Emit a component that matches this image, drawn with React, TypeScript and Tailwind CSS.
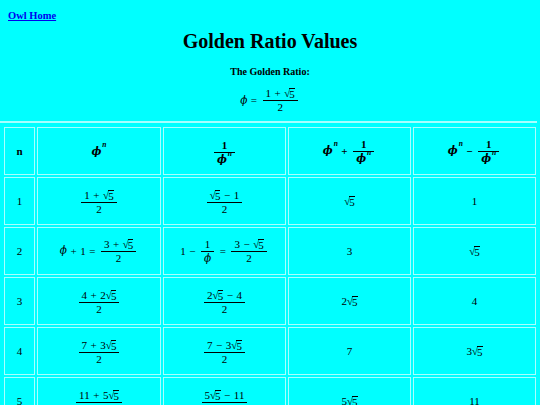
import React from "react";

const Sqrt = ({ children }: { children: React.ReactNode }) => (
  <span className="inline-flex items-start">
    <span className="leading-[12px] mr-[-1px]">√</span>
    <span className="border-t border-black leading-[11px] mt-[1px]">{children}</span>
  </span>
);

const Frac = ({ num, den }: { num: React.ReactNode; den: React.ReactNode }) => (
  <span className="inline-flex flex-col items-center align-middle mx-[2px]">
    <span className="px-[3px] leading-[13px] whitespace-nowrap">{num}</span>
    <span className="w-full border-t border-black" />
    <span className="px-[3px] leading-[13px] whitespace-nowrap">{den}</span>
  </span>
);

const Op = ({ c }: { c: string }) => <span className="mx-[3.5px]">{c}</span>;

const Phi = () => <span className="italic font-['DejaVu_Serif',serif] text-[10.5px]">ϕ</span>;
const PhiN = () => (
  <span className="inline-flex items-start whitespace-nowrap">
    <Phi />
    <span className="italic text-[7.5px] leading-[8px] ml-[1px] relative top-[-3px]">n</span>
  </span>
);

const Cell = ({ children }: { children: React.ReactNode }) => (
  <td className="border border-[#a8ffff] h-[48px] text-center align-middle p-0">
    <span className="inline-flex items-center justify-center whitespace-nowrap">{children}</span>
  </td>
);
const Head = ({ children, w }: { children: React.ReactNode; w?: string }) => (
  <th className={`border border-[#a8ffff] h-[48px] text-center align-middle p-0 font-bold ${w ?? ""}`}>
    <span className="inline-flex items-center justify-center whitespace-nowrap">{children}</span>
  </th>
);

export default function App() {
  const rows: React.ReactNode[][] = [
    [
      "1",
      <Frac num={<>1<Op c="+" /><Sqrt>5</Sqrt></>} den="2" />,
      <Frac num={<><Sqrt>5</Sqrt><Op c="−" />1</>} den="2" />,
      <Sqrt>5</Sqrt>,
      "1",
    ],
    [
      "2",
      <><Phi /><Op c="+" />1<Op c="=" /><Frac num={<>3<Op c="+" /><Sqrt>5</Sqrt></>} den="2" /></>,
      <>1<Op c="−" /><Frac num="1" den={<Phi />} /><Op c="=" /><Frac num={<>3<Op c="−" /><Sqrt>5</Sqrt></>} den="2" /></>,
      "3",
      <Sqrt>5</Sqrt>,
    ],
    [
      "3",
      <Frac num={<>4<Op c="+" />2<Sqrt>5</Sqrt></>} den="2" />,
      <Frac num={<>2<Sqrt>5</Sqrt><Op c="−" />4</>} den="2" />,
      <>2<Sqrt>5</Sqrt></>,
      "4",
    ],
    [
      "4",
      <Frac num={<>7<Op c="+" />3<Sqrt>5</Sqrt></>} den="2" />,
      <Frac num={<>7<Op c="−" />3<Sqrt>5</Sqrt></>} den="2" />,
      "7",
      <>3<Sqrt>5</Sqrt></>,
    ],
    [
      "5",
      <Frac num={<>11<Op c="+" />5<Sqrt>5</Sqrt></>} den="2" />,
      <Frac num={<>5<Sqrt>5</Sqrt><Op c="−" />11</>} den="2" />,
      <>5<Sqrt>5</Sqrt></>,
      "11",
    ],
  ];

  return (
    <div className="h-[405px] overflow-hidden bg-[#00ffff] font-['Liberation_Serif',serif] text-black">
      <div className="pt-[8px] pl-[8px] leading-[12px]">
        <a href="#" className="text-[10.5px] font-bold text-[#0000ee] underline">
          Owl Home
        </a>
      </div>
      <h1 className="mt-[7px] text-center text-[20px] leading-[24px] font-bold">Golden Ratio Values</h1>
      <div className="mt-[13px] text-center text-[10px] leading-[12px] font-bold">The Golden Ratio:</div>
      <div className="mt-[9px] flex justify-center items-center text-[11px]">
        <Phi />
        <Op c="=" />
        <Frac num={<>1<Op c="+" /><Sqrt>5</Sqrt></>} den="2" />
      </div>
      <div className="mt-[7px] h-[2px] w-[537px] bg-[#a8ffff]" />
      <table className="ml-[2px] mt-[2px] w-[536px] border-separate border-spacing-[2px] text-[11px] table-fixed">
        <thead>
          <tr>
            <Head w="w-[31px]">n</Head>
            <Head w="w-[124px]"><PhiN /></Head>
            <Head w="w-[123px]"><Frac num="1" den={<PhiN />} /></Head>
            <Head w="w-[123px]"><PhiN /><Op c="+" /><Frac num="1" den={<PhiN />} /></Head>
            <Head><PhiN /><Op c="−" /><Frac num="1" den={<PhiN />} /></Head>
          </tr>
        </thead>
        <tbody>
          {rows.map((r, i) => (
            <tr key={i}>
              {r.map((c, j) => (
                <Cell key={j}>{c}</Cell>
              ))}
            </tr>
          ))}
        </tbody>
      </table>
    </div>
  );
}
